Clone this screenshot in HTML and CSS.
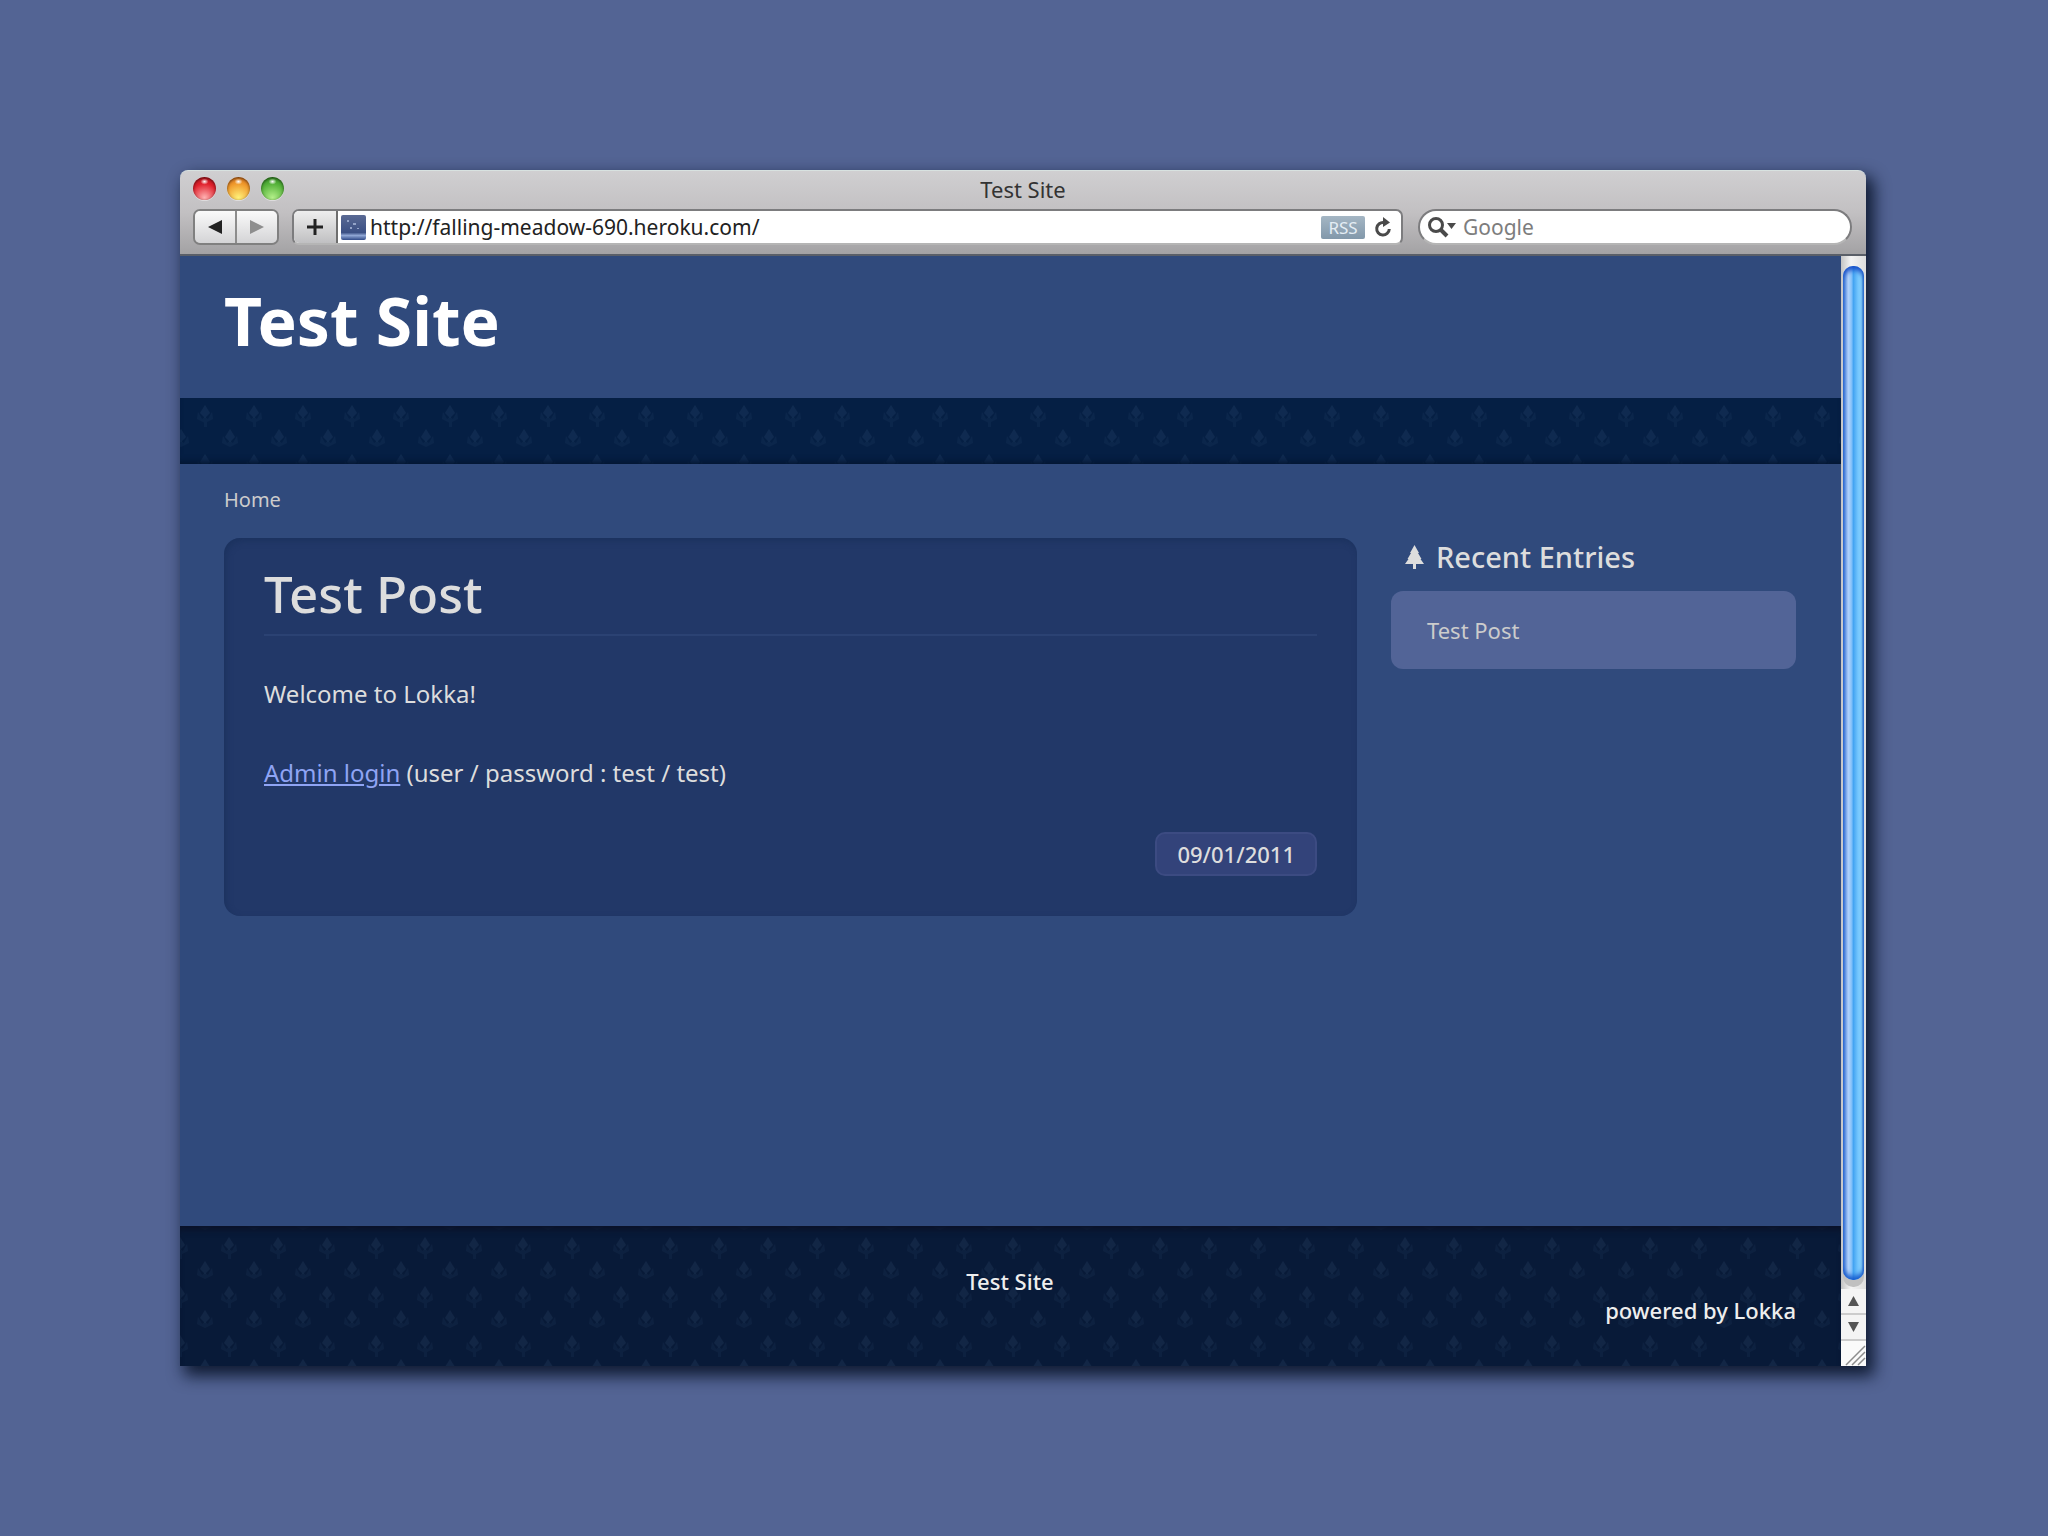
FILE: index.html
```html
<!DOCTYPE html>
<html lang="en">
<head>
<meta charset="UTF-8">
<meta name="viewport" content="width=device-width, initial-scale=1.0">
<title>Test Site</title>
<link rel="stylesheet" href="styles.css">
</head>
<body>

<div class="window">

    <!-- Browser chrome -->
    <div class="chrome">
        <div class="titlebar">
            <div class="lights">
                <button class="light red" aria-label="Close"></button>
                <button class="light yellow" aria-label="Minimize"></button>
                <button class="light green" aria-label="Zoom"></button>
            </div>
            <div class="window-title">Test Site</div>
        </div>
        <div class="toolbar">
            <div class="nav-buttons">
                <button class="tool" aria-label="Back">
                    <svg width="16" height="14" viewBox="0 0 16 14"><path d="M1 7L15 0v14z" fill="#222"/></svg>
                </button>
                <button class="tool" aria-label="Forward">
                    <svg width="16" height="14" viewBox="0 0 16 14"><path d="M15 7L1 0v14z" fill="#8e8e8e"/></svg>
                </button>
            </div>
            <div class="address">
                <button class="tool add" aria-label="Add bookmark">
                    <svg width="18" height="18" viewBox="0 0 18 18"><path d="M9 1v16M1 9h16" stroke="#222" stroke-width="3"/></svg>
                </button>
                <svg class="favicon" width="25" height="25" viewBox="0 0 25 25">
                    <defs>
                        <linearGradient id="sky" x1="0" y1="0" x2="0" y2="1">
                            <stop offset="0" stop-color="#5a6a94"/>
                            <stop offset=".7" stop-color="#3b5084"/>
                            <stop offset=".82" stop-color="#8fa6d4"/>
                            <stop offset="1" stop-color="#2f4a88"/>
                        </linearGradient>
                    </defs>
                    <rect width="25" height="25" rx="2" fill="url(#sky)"/>
                    <path d="M6 5h2v2H6zM12 8h3v2h-3zM9 12h2v2H9zM16 13h2v1h-2z" fill="#94a4c8"/>
                </svg>
                <input class="url" type="text" aria-label="Address" value="http://falling-meadow-690.heroku.com/">
                <button class="rss">RSS</button>
                <button class="reload" aria-label="Reload">
                    <svg width="18" height="20" viewBox="0 0 18 20">
                        <path d="M10 5.500A6.300 6.300 0 1 0 15.300 12" fill="none" stroke="#4a4a4a" stroke-width="3"/>
                        <path d="M9 0l7 5.500L9 10z" fill="#4a4a4a"/>
                    </svg>
                </button>
            </div>
            <div class="search">
                <svg width="30" height="24" viewBox="0 0 30 24">
                    <circle cx="9" cy="10" r="6.500" fill="none" stroke="#4a4a4a" stroke-width="3"/>
                    <path d="M13 14l7 7" stroke="#4a4a4a" stroke-width="4"/>
                    <path d="M20 8h9l-4.500 6z" fill="#4a4a4a"/>
                </svg>
                <input type="text" aria-label="Search" placeholder="Google">
            </div>
        </div>
    </div>

    <div class="viewport">
        <div class="page">
            <header class="header">
                <h1>Test Site</h1>
            </header>
            <div class="band"></div>

            <main class="content">
                <nav class="breadcrumb"><a href="#">Home</a></nav>
                <div class="columns">
                    <article class="post">
                        <h2>Test Post</h2>
                        <p>Welcome to Lokka!</p>
                        <p><a href="#">Admin login</a> (user / password : test / test)</p>
                        <time class="date">09/01/2011</time>
                    </article>
                    <aside class="sidebar">
                        <h3>
                            <svg width="19" height="24" viewBox="0 0 19 24"><path d="M9.500 0L14 8h-1l3.500 6h-1L19 19h-8v5H8v-5H0l3.500-5h-1L6 8H5z" fill="#ddd"/></svg>
                            Recent Entries
                        </h3>
                        <ul>
                            <li><a href="#">Test Post</a></li>
                        </ul>
                    </aside>
                </div>
            </main>

            <footer class="footer">
                <a class="home" href="#">Test Site</a>
                <a class="powered" href="#">powered by Lokka</a>
            </footer>
        </div>

        <!-- Scrollbar -->
        <div class="scrollbar">
            <div class="track"><div class="thumb"></div></div>
            <button aria-label="Scroll up">
                <svg width="11" height="10" viewBox="0 0 11 10"><path d="M5.500 0L11 10H0z" fill="#555"/></svg>
            </button>
            <button aria-label="Scroll down">
                <svg width="11" height="10" viewBox="0 0 11 10"><path d="M5.500 10L11 0H0z" fill="#555"/></svg>
            </button>
            <svg class="grip" width="25" height="25" viewBox="0 0 25 25"><path d="M5 24L24 5M11 24L24 11M17 24l7-7" stroke="#8c8c8c" stroke-width="1.500"/></svg>
        </div>
    </div>
</div>

</body>
</html>
```
FILE: styles.css
```css
* {
    box-sizing: border-box;
}

body {
    margin: 0;
    padding: 170px 182px 170px 180px;
    min-height: 100vh;
    display: flex;
    background: #536494;
    font-family: "Noto Sans", "Liberation Sans", sans-serif;
    font-size: 24px;
    color: #ddd;
}

button {
    margin: 0;
    padding: 0;
    border: none;
    background: none;
    font-family: inherit;
    display: flex;
    align-items: center;
    justify-content: center;
}

input {
    min-width: 0;
    flex: 1;
    padding: 0;
    border: none;
    outline: none;
    background: none;
    font-family: inherit;
    font-size: 21px;
    color: #222;
}

a {
    color: inherit;
    text-decoration: none;
}

svg {
    display: block;
}

.window {
    flex: 1;
    display: flex;
    flex-direction: column;
    border-radius: 8px 8px 0 0;
    box-shadow: 6px 8px 16px 2px rgba(5, 15, 35, 0.85);
}

/* Chrome */
.chrome {
    height: 86px;
    border-top: 1px solid #d8e2e0;
    border-bottom: 2px solid #5a5f68;
    border-radius: 8px 8px 0 0;
    background: linear-gradient(#d0cfd1, #c2c0c2 50%, #a3a2a4);
}

.titlebar {
    display: grid;
    grid-template-columns: 1fr auto 1fr;
    align-items: center;
    height: 35px;
    padding: 0 13px;
}

.lights {
    display: flex;
    gap: 11px;
}

.light {
    width: 23px;
    height: 23px;
    border-radius: 50%;
    box-shadow: inset 0 1px 3px rgba(0, 0, 0, 0.6), 0 1px 0 rgba(255, 255, 255, 0.4);
}

.red {
    background: radial-gradient(ellipse 4px 3px at 50% 20%, #fff, transparent), radial-gradient(circle at 50% 90%, #ffb3b3, #e0202c 60%, #b3121c);
}

.yellow {
    background: radial-gradient(ellipse 4px 3px at 50% 20%, #fff, transparent), radial-gradient(circle at 50% 90%, #fff27a, #f09a2c 60%, #d0661c);
}

.green {
    background: radial-gradient(ellipse 4px 3px at 50% 20%, #fff, transparent), radial-gradient(circle at 50% 90%, #b4f08a, #55b23a 60%, #2f8a22);
}

.window-title {
    font-size: 22px;
    line-height: 24px;
    color: #333;
}

.toolbar {
    display: flex;
    height: 40px;
    padding: 3px 14px 0 13px;
}

.nav-buttons {
    display: flex;
    width: 86px;
    height: 36px;
    margin-right: 13px;
    border: 2px solid #808080;
    border-radius: 7px;
    overflow: hidden;
}

.tool {
    flex: 1;
    background: linear-gradient(#fafafa, #d4d4d6);
}

.tool + .tool {
    border-left: 2px solid #8c8c8c;
}

.address {
    flex: 1;
    display: flex;
    align-items: center;
    height: 36px;
    margin-right: 15px;
    border: 2px solid #7c7c7e;
    border-bottom-color: #b5b5b5;
    border-radius: 7px;
    background: #fff;
    overflow: hidden;
}

.address .add {
    flex: none;
    width: 44px;
    height: 100%;
    border-right: 2px solid #6e6e6e;
    background: linear-gradient(#eee, #c0c0c2);
}

.favicon {
    margin: 0 4px 0 3px;
}

.rss {
    width: 44px;
    height: 23px;
    margin-right: 9px;
    border-radius: 2px;
    background: linear-gradient(#a4b6c4, #8298aa);
    font-size: 17px;
    color: #e4edf4;
}

.reload {
    margin-right: 9px;
}

.search {
    display: flex;
    align-items: center;
    width: 434px;
    height: 36px;
    padding: 0 16px 0 7px;
    border: 2px solid #7c7c7e;
    border-bottom-color: #b5b5b5;
    border-radius: 18px;
    background: #fff;
}

.search input {
    margin-left: 6px;
}

.search input::placeholder {
    color: #7d7d7d;
}

/* Page */
.viewport {
    flex: 1;
    display: flex;
}

.page {
    flex: 1;
    display: flex;
    flex-direction: column;
    background: #304a7c;
}

.header {
    height: 142px;
    padding: 20px 44px;
}

h1 {
    margin: 0;
    font-size: 66px;
    line-height: 88px;
    color: #fff;
}

/* Dark band with small trees */
.band,
.footer {
    background-image: url("data:image/svg+xml,%3Csvg xmlns='http://www.w3.org/2000/svg' width='49' height='49'%3E%3Cg fill='%235c7ba8' fill-opacity='.12'%3E%3Cpath d='M24 0l5 8-5 5-5-5z'/%3E%3Cpath d='M24 18l-8-4 1-7 4 7 3-2 3 2 4-7 1 7zM23 17h3v5h-3z' fill-opacity='.07'/%3E%3Cpath d='M0 24l5 8-5 5zM49 24l-5 8 5 5z'/%3E%3Cpath d='M0 36l3 2 4-7 1 7-8 4zM49 36l-3 2-4-7-1 7 8 4z' fill-opacity='.07'/%3E%3C/g%3E%3C/svg%3E");
}

.band {
    height: 66px;
    background-color: #051f44;
    background-position: 1px 7px;
    box-shadow: inset 0 -6px 6px -4px #03142f;
}

.content {
    flex: 1;
    padding: 20px 45px 40px 44px;
}

.breadcrumb {
    margin-bottom: 22px;
    font-size: 20px;
    line-height: 32px;
    color: #ccc;
}

.columns {
    display: grid;
    grid-template-columns: 1fr 405px;
    gap: 34px;
    align-items: start;
}

.post {
    display: flex;
    flex-direction: column;
    padding: 22px 40px 40px;
    border-radius: 16px;
    background: #223868;
    box-shadow: inset 2px 3px 6px rgba(24, 46, 88, 0.6);
}

.post h2 {
    margin: 0 0 38px;
    padding-bottom: 8px;
    border-bottom: 2px solid #2b4273;
    font-size: 51px;
    font-weight: 500;
    line-height: 66px;
}

.post p {
    margin: 0 0 39px;
    line-height: 40px;
}

.post p a {
    color: #8fa4f4;
    text-decoration: underline;
}

.date {
    align-self: flex-end;
    padding: 0 20px;
    border: 2px solid #3c4b82;
    border-radius: 10px;
    background: #33437a;
    font-size: 22px;
    font-weight: 500;
    line-height: 40px;
}

.sidebar h3 {
    display: flex;
    align-items: center;
    gap: 12px;
    margin: 0 0 15px;
    padding-left: 14px;
    font-size: 29px;
    font-weight: 500;
    line-height: 38px;
}

.sidebar ul {
    margin: 0;
    padding: 19px 36px;
    border-radius: 12px;
    background: #526497;
    list-style: none;
    font-size: 22px;
    line-height: 40px;
    color: #ccc;
}

.footer {
    display: flex;
    flex-direction: column;
    height: 140px;
    padding: 41px 45px 0 44px;
    background-color: #081a38;
    background-position: 25px 11px;
    box-shadow: inset 0 7px 6px -3px #0a1228;
    font-size: 22px;
    font-weight: 500;
    line-height: 29px;
    color: #eee;
}

.home {
    align-self: center;
}

.powered {
    align-self: flex-end;
}

/* Scrollbar */
.scrollbar {
    display: flex;
    flex-direction: column;
    width: 25px;
    background: #f4f4f4;
}

.track {
    flex: 1;
    display: flex;
    padding: 10px 2px 0;
    background: linear-gradient(to right, #c4c4c4, #f4f4f4 40%, #ddd);
}

.thumb {
    flex: 1;
    margin-bottom: 9px;
    border-radius: 10px;
    background: linear-gradient(to right, #5a94e0, #b6d4fa 25%, #86c2fa 40%, #44a4f2 50%, #7cccff 75%, #98e6ff 88%, #4a9ad0);
    box-shadow: inset 0 4px 5px #1a50c8, inset 0 -4px 5px #1a60d0, 0 7px 0 #c0c0c0;
}

.scrollbar button {
    height: 26px;
    border-bottom: 2px solid #ccc;
}

.grip {
    background: #fafafa;
}
```
